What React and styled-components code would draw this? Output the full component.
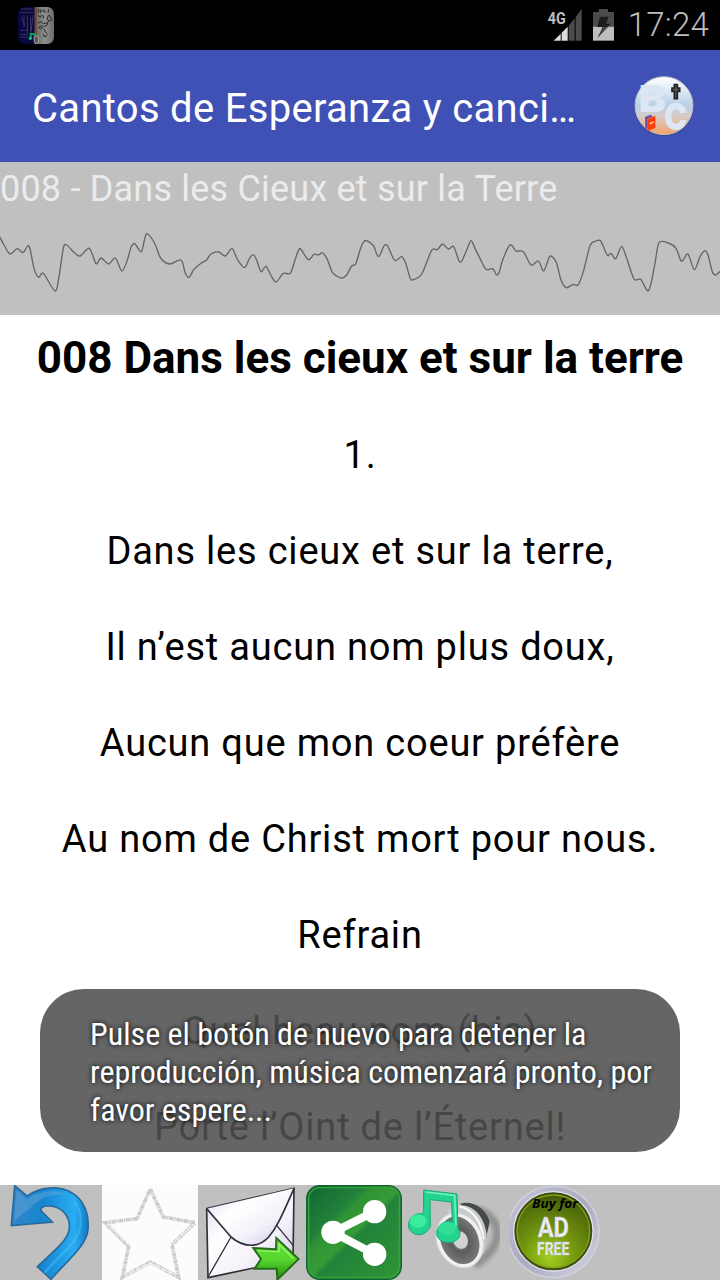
import styled, { createGlobalStyle } from "styled-components";

const GlobalStyle = createGlobalStyle`
  * {
    box-sizing: border-box;
  }
  body {
    margin: 0;
    background: #fff;
    font-family: Roboto, "Liberation Sans", sans-serif;
  }
`;

const Screen = styled.div`
  position: relative;
  display: flex;
  flex-direction: column;
  width: 720px;
  height: 1280px;
  overflow: hidden;
`;

const StatusBar = styled.div`
  display: flex;
  align-items: center;
  height: 50px;
  padding: 0 11px 0 18px;
  background: #000;
`;

const StatusIcons = styled.div`
  display: flex;
  margin-left: auto;
`;

const Clock = styled.span`
  margin-left: 13px;
  font-size: 33px;
  font-weight: 300;
  line-height: 52px;
  letter-spacing: 0.2px;
  color: #bebebe;
`;

const AppBar = styled.header`
  display: flex;
  align-items: center;
  justify-content: space-between;
  height: 112px;
  padding: 0 24px 0 32px;
  background: #3f51b5;
`;

const AppTitle = styled.h1`
  margin: 4px 0 0;
  font-size: 40px;
  font-weight: 400;
  letter-spacing: 0.3px;
  white-space: nowrap;
  color: #fff;
`;

const Player = styled.section`
  height: 153px;
  background: #c0c0c0;
`;

const Track = styled.div`
  height: 54px;
  font-size: 36px;
  line-height: 54px;
  letter-spacing: 0.2px;
  white-space: nowrap;
  color: #ebebeb;
`;

const Lyrics = styled.main`
  flex: 1;
  padding-top: 17px;
  overflow: hidden;
  text-align: center;
  white-space: nowrap;
  color: #000;
`;

const SongTitle = styled.h2`
  margin: 0 0 23px;
  font-size: 44px;
  font-weight: 700;
  line-height: 52px;
`;

const Verse = styled.p`
  height: 96px;
  margin: 0;
  font-size: 38px;
  line-height: 96px;
  letter-spacing: 0.8px;
`;

const Toast = styled.div`
  position: absolute;
  top: 989px;
  left: 40px;
  width: 640px;
  height: 163px;
  padding: 26px 0 0 50px;
  border-radius: 44px;
  background: rgba(80, 80, 80, 0.88);
  color: #fff;
  font-family: "Roboto Condensed", Roboto, sans-serif;
  font-stretch: condensed;
  font-size: 32px;
  line-height: 38px;
  white-space: nowrap;
  text-shadow: 0 0 5px #000;
`;

const ToastLine = styled.div`
  width: max-content;
`;

const Toolbar = styled.nav`
  display: flex;
  gap: 6px;
  height: 95px;
  background: #c0c0c0;
`;

const ToolButton = styled.button`
  width: 96px;
  height: 95px;
  padding: 0;
  border: 0;
  background: ${(props) => props.$bg || "transparent"};
  svg {
    display: block;
  }
`;

// x, y in thirds of a pixel
const wave = [
  [0,232],[12,255],[30,282],[52,266],[69,278],[87,258],[102,325],[116,352],[130,340],[165,393],[177,350],[190,264],[200,255],[225,280],[241,288],[268,265],[288,311],[303,294],[326,312],[346,294],[366,333],[382,300],[393,262],[404,251],[424,275],[435,232],[443,222],[465,252],[482,294],[509,312],[543,300],[556,340],[567,352],[582,328],[605,308],[620,300],[633,282],[656,276],[676,288],[696,266],[713,300],
  [734,323],[750,292],[761,285],[770,300],[783,335],[798,319],[815,350],[829,366],[850,340],[871,340],[885,300],[895,272],[902,267],[925,299],[942,283],[955,285],[968,279],[982,298],[998,338],[1024,354],[1040,345],[1055,318],[1067,312],[1080,270],[1090,247],[1100,242],[1121,258],[1130,282],[1138,288],[1153,256],[1164,260],[1184,301],[1205,290],[1217,310],[1230,353],[1238,360],[1265,342],[1295,271],[1312,269],[1328,252],[1345,267],[1361,260],[1377,303],[1386,302],[1400,270],[1413,242],[1425,265],
  [1440,295],[1458,328],[1478,326],[1490,345],[1498,335],[1508,300],[1528,257],[1537,258],[1548,273],[1570,275],[1593,315],[1615,303],[1631,333],[1647,293],[1655,289],[1669,307],[1683,360],[1699,383],[1719,373],[1734,375],[1750,335],[1770,257],[1785,244],[1802,243],[1822,286],[1833,280],[1847,296],[1865,259],[1880,295],[1902,357],[1922,358],[1942,392],[1952,375],[1965,310],[1977,248],[2005,249],[2028,265],[2042,301],[2049,301],[2064,282],[2083,329],[2100,290],[2115,272],[2124,285],[2137,335],[2147,345],[2162,333],
];

const wavePath = (pts) => {
  let d = `M${pts[0]}`;
  for (let i = 0; i < pts.length - 1; i++) {
    const p0 = pts[i - 1] || pts[i];
    const p1 = pts[i];
    const p2 = pts[i + 1];
    const p3 = pts[i + 2] || p2;
    d += `C${p1[0] + (p2[0] - p0[0]) / 7},${p1[1] + (p2[1] - p0[1]) / 7} ${p2[0] - (p3[0] - p1[0]) / 7},${p2[1] - (p3[1] - p1[1]) / 7} ${p2}`;
  }
  return d;
};

const Wave = () => (
  <svg width="720" height="99" viewBox="0 168 2160 297" display="block">
    <path d={wavePath(wave)} fill="none" stroke="#696363" strokeWidth="4" />
  </svg>
);

const SongbookIcon = () => (
  <svg width="36" height="37" viewBox="54 18 108 111">
    <defs>
      <clipPath id="book"><rect x="54" y="18" width="108" height="111" rx="20" /></clipPath>
      <linearGradient id="page"><stop stopColor="#666863" /><stop offset=".5" stopColor="#8d908b" /><stop offset="1" stopColor="#696c68" /></linearGradient>
    </defs>
    <g clipPath="url(#book)">
      <path d="M54 18h54v111H54z" fill="#08083f" />
      <path d="M108 18h54v111h-54z" fill="url(#page)" />
      <path d="M107 18v111" stroke="#704840" strokeWidth="7" />
      <path d="M64 24h33M62 35h39" stroke="#454560" strokeWidth="3" strokeDasharray="5 2" />
      <path d="M64 48l10 25M72 43v35M82 43v55M92 48v42M99 43l-7 60M62 88h20M61 100h22M61 108h23" stroke="#39395e" strokeWidth="3" />
      <path d="M115 24v10M121 26v8l7-7M132 24v9h7M145 24v10M115 43l5 6 6-7M130 43v8M141 51l6-9 9 14-10 5zM114 66l9-4 8 6 13-3-4 9-10 3-8 8-5-6 10-5M132 83l5 11 5 4M130 99l4 9 8-6" fill="none" stroke="#292b29" strokeWidth="3" />
      <path d="M92 112V99h12v11" fill="none" stroke="#08a064" strokeWidth="6" />
      <circle cx="91" cy="112" r="5" fill="#15b67a" />
      <ellipse cx="109" cy="116" rx="7" ry="12" fill="#555" stroke="#aaa" strokeWidth="3" />
    </g>
  </svg>
);

const SignalIcon = () => (
  <svg width="36" height="34" viewBox="58 22 108 102">
    <path d="M78 120l21-21v21z" fill="#ddd" />
    <path d="M102 96l18-18v42h-18z" fill="#ddd" />
    <path d="M123 75l18-22v67h-18zM144 50l18-26v96h-18z" fill="#4b4b4b" />
    <text x="60" y="70" fontFamily="Roboto, sans-serif" fontSize="49" fontWeight="700" textLength="54" lengthAdjust="spacingAndGlyphs" fill="#bebebe">4G</text>
  </svg>
);

const BatteryIcon = () => (
  <svg width="23" height="34" viewBox="192 22 69 102">
    <path d="M195 34h17v-9h28v9h18v44h-63z" fill="#4b4b4b" />
    <path d="M195 78h63v42h-63z" fill="#bebebe" />
    <path d="M216 48h26l-8 21h14l-39 42 15-32h-16z" fill="#1c1c1c" />
    <path d="M212 78h15l-18 33 31-33z" fill="#484848" />
  </svg>
);

const BCLogo = () => (
  <svg width="64" height="64" viewBox="306 222 192 192">
    <defs>
      <linearGradient id="sky" x2="0" y2="1"><stop stopColor="#fff" /><stop offset=".5" stopColor="#b7cfe8" /><stop offset=".68" stopColor="#d7ccc7" /><stop offset="1" stopColor="#f3a367" /></linearGradient>
    </defs>
    <circle cx="402" cy="319" r="89" fill="#222" opacity=".3" />
    <circle cx="402" cy="317" r="87" fill="url(#sky)" stroke="#b9bdcb" strokeWidth="3" />
    <text x="326" y="337" fontFamily="Inter, sans-serif" fontSize="111" fontWeight="900" textLength="82" lengthAdjust="spacingAndGlyphs" fill="#dce7f3">B</text>
    <text x="402" y="391" fontFamily="Inter, sans-serif" fontSize="109" fontWeight="900" textLength="70" lengthAdjust="spacingAndGlyphs" fill="#dce7f3">C</text>
    <path d="M433 254h9v10h7v10h-7v22h-9v-22h-7v-10h7z" fill="#555" stroke="#202020" strokeWidth="5" />
    <path d="M345 351l16-7 8 5-16 8v31l-7-4z" fill="#6950a0" />
    <path d="M353 357l23-10v37l-23 9z" fill="#ff3c08" />
    <path d="M359 371l12-5" stroke="#ffd49b" strokeWidth="5" />
  </svg>
);

const BackIcon = () => (
  <svg width="96" height="95" viewBox="0 15 288 285">
    <defs>
      <linearGradient id="undo"><stop stopColor="#3187c9" /><stop offset=".4" stopColor="#1685cf" /><stop offset=".82" stopColor="#29acf3" /><stop offset="1" stopColor="#137bc2" /></linearGradient>
    </defs>
    <path d="M44 17L81 48C119 20 178 16 215 38C251 58 268 100 264 149C260 199 195 248 153 298L112 260C155 219 201 184 207 151C214 113 188 78 145 78C129 78 119 84 124 93L157 126L34 137Z" fill="url(#undo)" stroke="#286b9b" strokeWidth="5" />
    <path d="M50 30l30 28C116 29 174 26 207 48C153 33 113 60 93 82l-51 41z" fill="#76a9d8" opacity=".4" />
    <path d="M223 65c35 48 20 102-20 140l-70 73" fill="none" stroke="#49c2ff" strokeWidth="7" opacity=".45" />
  </svg>
);

const StarIcon = () => (
  <svg width="96" height="95" viewBox="306 15 288 285">
    <path d="M451 27L490 111L585 128L516 194L536 292L451 246L367 292L386 199L315 128L411 116Z" fill="#fcfcfc" stroke="#ccc" strokeWidth="11" strokeDasharray="13 2 5 2" />
    <path d="M324 133l60 59M520 190l59-57M376 286l75-37 76 36" fill="none" stroke="#fff" strokeWidth="4" strokeDasharray="4 3" />
  </svg>
);

const MailIcon = () => (
  <svg width="96" height="95" viewBox="12 15 288 285">
    <defs>
      <linearGradient id="paper" x2="1" y2="1"><stop stopColor="#d8d5f0" /><stop offset=".35" stopColor="#fff" /><stop offset=".65" stopColor="#f4f1f9" /><stop offset="1" stopColor="#c5bfe5" /></linearGradient>
      <linearGradient id="send" x2="0" y2="1"><stop stopColor="#65df38" /><stop offset=".5" stopColor="#58d82e" /><stop offset="1" stopColor="#218c13" /></linearGradient>
    </defs>
    <path d="M20 86L282 25L279 239L24 293Z" fill="url(#paper)" stroke="#333039" strokeWidth="5" />
    <path d="M24 291L93 171M230 136L280 197" stroke="#333039" strokeWidth="4" />
    <path d="M20 86L93 171C133 205 177 203 206 171C226 148 239 124 282 25" fill="url(#paper)" stroke="#333039" strokeWidth="5" />
    <path d="M160 204L228 208L229 174L296 237L232 299L230 266L164 266L183 237Z" fill="url(#send)" stroke="#286c1d" strokeWidth="6" />
    <path d="M174 212l63 3V192l42 43" fill="none" stroke="#9af56a" strokeWidth="4" />
  </svg>
);

const ShareIcon = () => (
  <svg width="96" height="95" viewBox="318 15 288 285">
    <defs>
      <linearGradient id="green" x2="1" y2="1"><stop stopColor="#116635" /><stop offset=".3" stopColor="#218039" /><stop offset=".36" stopColor="#2f9234" /><stop offset=".5" stopColor="#369c37" /><stop offset=".54" stopColor="#23823a" /><stop offset="1" stopColor="#309536" /></linearGradient>
    </defs>
    <rect x="320" y="17" width="284" height="281" rx="39" fill="url(#green)" stroke="#126333" strokeWidth="4" />
    <rect x="326" y="23" width="272" height="269" rx="33" fill="none" stroke="#36a43b" strokeWidth="4" />
    <path d="M523 95L399 157L523 222" fill="none" stroke="#fff" strokeWidth="24" />
    <circle cx="524" cy="95" r="35" fill="#fff" />
    <circle cx="399" cy="157" r="35" fill="#fff" />
    <circle cx="524" cy="223" r="35" fill="#fff" />
  </svg>
);

const MusicIcon = () => (
  <svg width="96" height="95" viewBox="24 15 288 285">
    <defs>
      <radialGradient id="cone"><stop stopColor="#999" /><stop offset=".5" stopColor="#5d5d5d" /><stop offset="1" stopColor="#777" /></radialGradient>
      <filter id="soft"><feGaussianBlur stdDeviation="7" /></filter>
    </defs>
    <path d="M233 89c90 38 69 116-10 167" fill="none" stroke="#555" strokeWidth="25" opacity=".45" filter="url(#soft)" />
    <path d="M182 71c35-11 77 15 87 55l-15 65-74-103z" fill="#444a4b" />
    <path d="M139 91l44-16c48 4 71 44 77 88l-7 53-29 39-78-153z" fill="#c9cccd" />
    <path d="M178 79c44 10 69 51 72 99" fill="none" stroke="#f8f8f8" strokeWidth="7" />
    <ellipse cx="179" cy="181" rx="68" ry="85" transform="rotate(-24 179 181)" fill="#f1f1f1" stroke="#d1d1d1" strokeWidth="3" />
    <ellipse cx="179" cy="181" rx="56" ry="74" transform="rotate(-24 179 181)" fill="url(#cone)" />
    <ellipse cx="181" cy="180" rx="22" ry="27" transform="rotate(-24 181 180)" fill="#d3d3d3" />
    <path d="M71 30L171 42L174 145C191 171 166 191 140 187C110 184 101 158 120 136C131 124 146 119 157 126L155 66L90 59L91 138C79 171 39 172 27 145C20 121 40 96 66 102L71 94Z" fill="#21d58e" stroke="#18a676" strokeWidth="3" />
    <path d="M76 36l88 10 4 92" fill="none" stroke="#75ebbf" strokeWidth="5" />
    <ellipse cx="54" cy="123" rx="25" ry="20" fill="#3cec9d" />
    <ellipse cx="141" cy="145" rx="26" ry="20" fill="#32df99" />
  </svg>
);

const AdFreeIcon = () => (
  <svg width="96" height="95" viewBox="330 15 288 285">
    <defs>
      <radialGradient id="olive" cx=".45" cy=".85" r=".95"><stop stopColor="#a3cf20" /><stop offset=".4" stopColor="#72950e" /><stop offset=".8" stopColor="#4e680b" /><stop offset="1" stopColor="#344409" /></radialGradient>
      <linearGradient id="metal" x2="1" y2="1"><stop stopColor="#c7c7d7" /><stop offset=".5" stopColor="#a9a9c0" /><stop offset="1" stopColor="#d6d6e4" /></linearGradient>
    </defs>
    <circle cx="460" cy="156" r="137" fill="url(#metal)" stroke="#d2d2dc" strokeWidth="4" />
    <circle cx="460" cy="154" r="119" fill="#3e4c16" stroke="#e1e1e8" strokeWidth="4" />
    <circle cx="460" cy="154" r="109" fill="url(#olive)" stroke="#80a515" strokeWidth="4" />
    <text x="396" y="84" fontFamily="Open Sans, sans-serif" fontStyle="italic" fontWeight="700" fontSize="36" textLength="138" lengthAdjust="spacingAndGlyphs" fill="#000">Buy for</text>
    <g fontFamily="Roboto, sans-serif" fontWeight="700" fill="#eeeef5" stroke="#bcbccc" strokeWidth="1">
      <text x="413" y="170" fontSize="85" textLength="94" lengthAdjust="spacingAndGlyphs">AD</text>
      <text x="411" y="225" fontSize="54" textLength="97" lengthAdjust="spacingAndGlyphs">FREE</text>
    </g>
  </svg>
);

const verses = [
  "1.",
  "Dans les cieux et sur la terre,",
  "Il n’est aucun nom plus doux,",
  "Aucun que mon coeur préfère",
  "Au nom de Christ mort pour nous.",
  "Refrain",
  "Quel beau nom (bis)",
  "Porte l’Oint de l’Éternel!",
];

export default function App() {
  return (
    <Screen>
      <GlobalStyle />
      <StatusBar>
        <SongbookIcon />
        <StatusIcons>
          <SignalIcon />
          <svg width="9" height="34" />
          <BatteryIcon />
        </StatusIcons>
        <Clock>17:24</Clock>
      </StatusBar>
      <AppBar>
        <AppTitle>Cantos de Esperanza y canci…</AppTitle>
        <BCLogo />
      </AppBar>
      <Player>
        <Track>008 - Dans les Cieux et sur la Terre</Track>
        <Wave />
      </Player>
      <Lyrics>
        <SongTitle>008 Dans les cieux et sur la terre</SongTitle>
        {verses.map((line) => (
          <Verse key={line}>{line}</Verse>
        ))}
      </Lyrics>
      <Toolbar>
        <ToolButton><BackIcon /></ToolButton>
        <ToolButton $bg="#fcfcfc"><StarIcon /></ToolButton>
        <ToolButton><MailIcon /></ToolButton>
        <ToolButton><ShareIcon /></ToolButton>
        <ToolButton><MusicIcon /></ToolButton>
        <ToolButton><AdFreeIcon /></ToolButton>
      </Toolbar>
      <Toast>
        <ToastLine>Pulse el botón de nuevo para detener la</ToastLine>
        <ToastLine>reproducción, música comenzará pronto, por</ToastLine>
        <ToastLine>favor espere...</ToastLine>
      </Toast>
    </Screen>
  );
}
